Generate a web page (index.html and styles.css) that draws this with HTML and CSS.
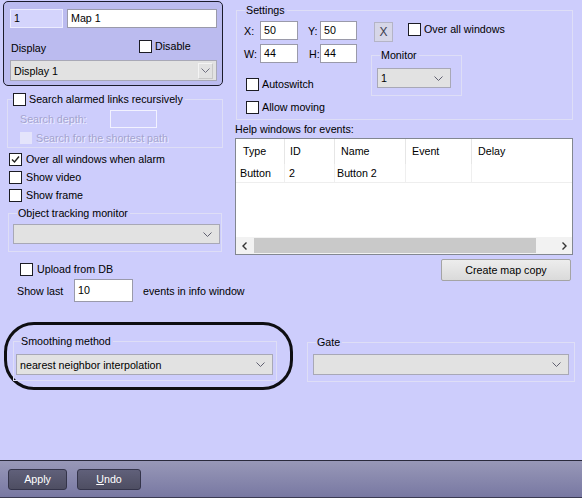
FILE: index.html
```html
<!DOCTYPE html>
<html>
<head>
<meta charset="utf-8">
<link rel="stylesheet" href="styles.css">
</head>
<body>
<div class="content">
  <div class="upper">
    <div class="left">
      <div class="panel">
        <div class="p-row1">
          <div class="inp inp-id">1</div>
          <div class="inp inp-name">Map 1</div>
        </div>
        <div class="p-row2">
          <span class="lbl-display">Display</span>
          <span class="chk"><span class="box"></span>Disable</span>
        </div>
        <div class="combo combo-display">
          <span class="combo-text">Display 1</span>
          <span class="dropbtn"><svg width="9" height="5" viewBox="0 0 9 5"><path d="M0.5 0.5 L4.5 4.5 L8.5 0.5" fill="none" stroke="#707080" stroke-width="1"/></svg></span>
        </div>
      </div>

      <div class="group g-search">
        <div class="gtitle chk"><span class="box"></span>Search alarmed links recursively</div>
        <div class="depth-row">
          <span class="disabled-text depth-lbl">Search depth:</span>
          <span class="inp-disabled"></span>
        </div>
        <div class="chk short-row"><span class="box box-disabled"></span><span class="disabled-text">Search for the shortest path</span></div>
      </div>

      <div class="chk chkrow first"><span class="box"><svg width="11" height="11" viewBox="0 0 11 11"><path d="M2 5.5 L4.5 8 L9 2.5" fill="none" stroke="#222" stroke-width="1.4"/></svg></span>Over all windows when alarm</div>
      <div class="chk chkrow"><span class="box"></span>Show video</div>
      <div class="chk chkrow"><span class="box"></span>Show frame</div>

      <div class="group g-track">
        <div class="gtitle">Object tracking monitor</div>
        <div class="combo combo-track">
          <span class="combo-text"></span>
          <svg class="chev" width="9" height="5" viewBox="0 0 9 5"><path d="M0.5 0.5 L4.5 4.5 L8.5 0.5" fill="none" stroke="#606070" stroke-width="1"/></svg>
        </div>
      </div>

      <div class="chk upload-row"><span class="box"></span>Upload from DB</div>
      <div class="showlast-row">
        <span class="showlast-lbl">Show last</span>
        <div class="inp inp-last">10</div>
        <span class="showlast-tail">events in info window</span>
      </div>
    </div>

    <div class="right">
      <div class="group g-settings">
        <div class="gtitle">Settings</div>
        <div class="settings-body">
          <div class="s-left">
            <div class="xy-row">
              <span class="lab lab-x">X:</span><div class="inp inp-xy">50</div>
              <span class="lab lab-y">Y:</span><div class="inp inp-xy2">50</div>
            </div>
            <div class="xy-row wh-row">
              <span class="lab lab-x">W:</span><div class="inp inp-xy">44</div>
              <span class="lab lab-h">H:</span><div class="inp inp-xy2">44</div>
            </div>
            <div class="chk auto-row"><span class="box"></span>Autoswitch</div>
            <div class="chk move-row"><span class="box"></span>Allow moving</div>
          </div>
          <div class="s-right">
            <div class="xbtn-row">
              <span class="xbtn">X</span>
              <span class="chk over-chk"><span class="box"></span>Over all windows</span>
            </div>
            <div class="group g-monitor">
              <div class="gtitle">Monitor</div>
              <div class="combo combo-monitor">
                <span class="combo-text">1</span>
                <svg class="chev" width="9" height="5" viewBox="0 0 9 5"><path d="M0.5 0.5 L4.5 4.5 L8.5 0.5" fill="none" stroke="#606070" stroke-width="1"/></svg>
              </div>
            </div>
          </div>
        </div>
      </div>

      <div class="help-lbl">Help windows for events:</div>
      <div class="table">
        <div class="trow thead">
          <span class="c c1">Type</span>
          <span class="c c2">ID</span>
          <span class="c c3">Name</span>
          <span class="c c4">Event</span>
          <span class="c c5">Delay</span>
        </div>
        <div class="trow tbody">
          <span class="c c1">Button</span>
          <span class="c c2">2</span>
          <span class="c c3">Button 2</span>
          <span class="c c4"></span>
          <span class="c c5"></span>
        </div>
        <div class="tfill"></div>
        <div class="hscroll">
          <span class="sarrow"><svg width="6" height="8" viewBox="0 0 6 8"><path d="M4.5 0.5 L1 4 L4.5 7.5" fill="none" stroke="#333" stroke-width="1.4"/></svg></span>
          <span class="strack"><span class="sthumb"></span></span>
          <span class="sarrow"><svg width="6" height="8" viewBox="0 0 6 8"><path d="M1.5 0.5 L5 4 L1.5 7.5" fill="none" stroke="#333" stroke-width="1.4"/></svg></span>
        </div>
      </div>
      <div class="btn-copy">Create map copy</div>
    </div>
  </div>

  <div class="lower">
    <div class="ellipse">
      <div class="group g-smooth">
        <div class="gtitle">Smoothing method</div>
        <div class="combo combo-smooth">
          <span class="combo-text">nearest neighbor interpolation</span>
          <svg class="chev" width="9" height="5" viewBox="0 0 9 5"><path d="M0.5 0.5 L4.5 4.5 L8.5 0.5" fill="none" stroke="#606070" stroke-width="1"/></svg>
        </div>
      </div>
    </div>
    <div class="group g-gate">
      <div class="gtitle">Gate</div>
      <div class="combo combo-gate">
        <span class="combo-text"></span>
        <svg class="chev" width="9" height="5" viewBox="0 0 9 5"><path d="M0.5 0.5 L4.5 4.5 L8.5 0.5" fill="none" stroke="#606070" stroke-width="1"/></svg>
      </div>
    </div>
  </div>
</div>

<div class="bottombar">
  <div class="dbtn btn-apply">Apply</div>
  <div class="dbtn btn-undo"><span class="u">U</span>ndo</div>
</div>
</body>
</html>
```

FILE: styles.css
```css
* { box-sizing: border-box; }

html, body {
  margin: 0;
  padding: 0;
}

body {
  width: 582px;
  height: 498px;
  background: #cdcdfc;
  font-family: "Liberation Sans", Arial, sans-serif;
  font-size: 10.7px;
  color: #000;
  display: flex;
  flex-direction: column;
  overflow: hidden;
}

.content {
  flex: 1;
  display: flex;
  flex-direction: column;
}

.upper {
  display: grid;
  grid-template-columns: 230px 352px;
  align-items: start;
}

/* ---------- generic controls ---------- */
.chk {
  display: flex;
  align-items: center;
  gap: 3px;
  height: 13px;
  line-height: 13px;
  white-space: nowrap;
}

.box {
  width: 13px;
  height: 13px;
  flex: 0 0 13px;
  border: 1px solid #1c1c24;
  background: #fff;
  display: flex;
  align-items: center;
  justify-content: center;
}

.box-disabled {
  width: 12px;
  height: 12px;
  flex: 0 0 12px;
  border: none;
  background: #e4e4fb;
}

.inp {
  background: #fff;
  border: 1px solid #9a9aaa;
  padding-left: 3px;
  line-height: 17px;
  height: 19px;
}

.combo {
  display: flex;
  align-items: center;
  background: #e2e2e2;
  border: 1px solid #a8a8b6;
  padding-left: 3px;
  padding-right: 7px;
}

.combo-text {
  flex: 1;
  white-space: nowrap;
}

.chev {
  display: block;
}

.group {
  border: 1px solid #dedef6;
}

.gtitle {
  height: 13px;
  line-height: 13px;
  margin-top: -7px;
  background: #cdcdfc;
  width: fit-content;
  padding: 0 2px 0 1px;
  white-space: nowrap;
}

.disabled-text {
  color: #a4a4d0;
  text-shadow: 1px 1px 0 #eeeeff;
}

/* ---------- left column ---------- */
.left {
  padding-left: 3px;
  padding-top: 1px;
}

.panel {
  width: 220px;
  height: 85px;
  border: 1px solid #1b1b2b;
  border-radius: 5px;
  background: #bbbbef;
  padding: 7px 0 0 6px;
}

.p-row1 {
  display: flex;
  gap: 4px;
}

.inp-id {
  width: 53px;
  background: #d4d4fc;
  border-color: #ececff;
}

.inp-name {
  width: 150px;
}

.p-row2 {
  display: flex;
  align-items: center;
  margin-top: 12px;
  height: 13px;
}

.lbl-display {
  width: 129px;
  padding-left: 1px;
  padding-top: 2px;
}

.combo-display {
  margin-top: 7px;
  width: 207px;
  height: 21px;
  padding-right: 3px;
}

.dropbtn {
  width: 15px;
  height: 16px;
  border: 1px solid #f4f4f4;
  border-right-color: #c8c8c8;
  border-bottom-color: #c8c8c8;
  display: flex;
  align-items: center;
  justify-content: center;
}

.g-search {
  margin-top: 13px;
  margin-left: 4px;
  width: 216px;
  height: 49px;
}

.g-search .gtitle {
  margin-left: 5px;
  padding: 0 2px 0 0;
}

.depth-row {
  display: flex;
  align-items: center;
  margin-top: 4px;
  margin-left: 12px;
  height: 18px;
}

.depth-lbl {
  width: 90px;
}

.inp-disabled {
  width: 47px;
  height: 18px;
  border: 1px solid #f2f2ff;
}

.short-row {
  margin-top: 4px;
  margin-left: 12px;
  gap: 4px;
  height: 12px;
}

.chkrow {
  margin-left: 6px;
  margin-top: 5px;
  gap: 4px;
}

.chkrow.first {
  margin-top: 5px;
}

.g-track {
  margin-top: 11px;
  margin-left: 5px;
  width: 214px;
  height: 39px;
}

.g-track .gtitle {
  margin-left: 8px;
}

.combo-track {
  margin-top: 4px;
  margin-left: 4px;
  width: 207px;
  height: 20px;
}

.upload-row {
  margin-top: 11px;
  margin-left: 17px;
  gap: 4px;
}

.showlast-row {
  display: flex;
  align-items: center;
  margin-top: 3px;
  height: 23px;
  white-space: nowrap;
}

.showlast-lbl {
  margin-left: 14px;
  width: 57px;
  flex: 0 0 57px;
}

.inp-last {
  width: 59px;
  flex: 0 0 59px;
  height: 23px;
  line-height: 21px;
}

.showlast-tail {
  margin-left: 10px;
  flex: 0 0 auto;
}

/* ---------- right column ---------- */
.g-settings {
  margin-top: 10px;
  margin-left: 6px;
  width: 337px;
  height: 110px;
}

.g-settings > .gtitle {
  margin-left: 8px;
}

.settings-body {
  display: flex;
}

.s-left {
  width: 134px;
  padding-left: 7px;
}

.xy-row {
  display: flex;
  align-items: center;
  margin-top: 4px;
  height: 19px;
}

.lab-x { width: 16px; }
.lab-y { width: 12px; margin-left: 10px; }
.lab-h { width: 11px; margin-left: 11px; }

.inp-xy { width: 38px; }
.inp-xy2 { width: 37px; }

.auto-row {
  margin-top: 15px;
  margin-left: 2px;
}

.move-row {
  margin-top: 10px;
  margin-left: 2px;
}

.s-right {
  display: flex;
  flex-direction: column;
}

.xbtn-row {
  display: flex;
  align-items: flex-start;
  margin-top: 5px;
  margin-left: 3px;
}

.xbtn {
  width: 19px;
  height: 20px;
  background: #d6d6e8;
  border: 1px solid #b4b4c6;
  color: #404050;
  font-size: 12px;
  line-height: 19px;
  text-align: center;
}

.over-chk {
  margin-left: 15px;
  margin-top: 1px;
}

.g-monitor {
  margin-top: 13px;
  width: 91px;
  height: 41px;
}

.g-monitor .gtitle {
  margin-left: 8px;
}

.combo-monitor {
  margin-top: 6px;
  margin-left: 5px;
  width: 74px;
  height: 20px;
}

.help-lbl {
  margin-top: 3px;
  margin-left: 5px;
  height: 13px;
  line-height: 13px;
}

.table {
  margin-top: 2px;
  margin-left: 5px;
  width: 338px;
  height: 117px;
  border: 1px solid #828790;
  background: #fff;
  display: flex;
  flex-direction: column;
}

.trow {
  display: grid;
  grid-template-columns: 49px 50px 71px 66px 1fr;
}

.thead {
  height: 25px;
  line-height: 25px;
}

.thead .c {
  border-right: 1px solid #e6e6e6;
}

.thead .c1 { padding-left: 7px; }
.thead .c2 { padding-left: 5px; }
.thead .c3 { padding-left: 6px; }
.thead .c4 { padding-left: 6px; }
.thead .c5 { padding-left: 6px; border-right: none; }

.tbody {
  height: 19px;
  line-height: 18px;
  border-bottom: 1px solid #eeeeee;
}

.tbody .c {
  border-right: 1px solid #efefef;
}

.tbody .c1 { padding-left: 4px; }
.tbody .c2 { padding-left: 4px; }
.tbody .c3 { padding-left: 2px; }
.tbody .c5 { border-right: none; }

.tfill {
  flex: 1;
}

.hscroll {
  height: 17px;
  display: flex;
  background: #f2f2f2;
}

.sarrow {
  width: 17px;
  display: flex;
  align-items: center;
  justify-content: center;
}

.strack {
  flex: 1;
  display: flex;
  padding: 1px 0;
}

.sthumb {
  margin-left: 1px;
  width: 282px;
  background: #c9c9c9;
}

.btn-copy {
  margin-top: 4px;
  margin-left: 211px;
  width: 130px;
  height: 22px;
  line-height: 20px;
  text-align: center;
  background: linear-gradient(#ededed, #dadada);
  border: 1px solid #a4a4a4;
  border-radius: 2px;
}

/* ---------- lower row ---------- */
.lower {
  display: flex;
  align-items: flex-start;
  margin-top: 20px;
}

.ellipse {
  margin-left: 4px;
  width: 289px;
  height: 68px;
  border: 3px solid #0e0e12;
  border-radius: 30px;
  padding-top: 16px;
  padding-left: 6px;
}

.g-smooth {
  width: 264px;
  height: 40px;
}

.g-smooth .gtitle {
  margin-left: 6px;
}

.combo-smooth {
  margin-top: 6px;
  margin-left: 2px;
  width: 257px;
  height: 21px;
}

.g-gate {
  margin-left: 14px;
  margin-top: 20px;
  width: 268px;
  height: 40px;
}

.g-gate .gtitle {
  margin-left: 8px;
}

.combo-gate {
  margin-top: 5px;
  margin-left: 5px;
  width: 256px;
  height: 21px;
}

/* ---------- bottom bar ---------- */
.bottombar {
  height: 38px;
  flex: 0 0 38px;
  border-top: 1px solid #2a2a3c;
  border-bottom: 1px solid #3a3a52;
  background: linear-gradient(#9898b8, #7878a2);
  display: flex;
  align-items: flex-start;
  padding: 8px 0 0 8px;
}

.dbtn {
  height: 21px;
  line-height: 19px;
  text-align: center;
  color: #fff;
  background: linear-gradient(#60607a, #4e4e62);
  border: 1px solid #34344a;
  border-radius: 3px;
}

.btn-apply { width: 59px; }
.btn-undo { width: 64px; margin-left: 10px; }

.u { text-decoration: underline; }
```
